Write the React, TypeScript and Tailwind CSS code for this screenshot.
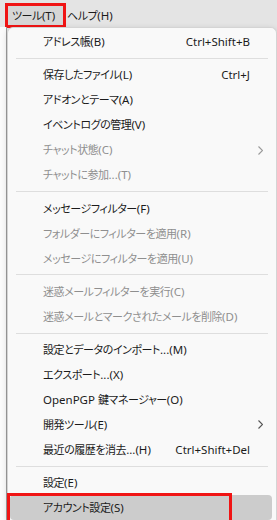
import React from "react";

type Item = {
  label: string;
  shortcut?: string;
  disabled?: boolean;
  submenu?: boolean;
  active?: boolean;
};

type Entry = Item | "sep";

const entries: Entry[] = [
  { label: "アドレス帳(B)", shortcut: "Ctrl+Shift+B" },
  "sep",
  { label: "保存したファイル(L)", shortcut: "Ctrl+J" },
  { label: "アドオンとテーマ(A)" },
  { label: "イベントログの管理(V)" },
  { label: "チャット状態(C)", disabled: true, submenu: true },
  { label: "チャットに参加...(T)", disabled: true },
  "sep",
  { label: "メッセージフィルター(F)" },
  { label: "フォルダーにフィルターを適用(R)", disabled: true },
  { label: "メッセージにフィルターを適用(U)", disabled: true },
  "sep",
  { label: "迷惑メールフィルターを実行(C)", disabled: true },
  { label: "迷惑メールとマークされたメールを削除(D)", disabled: true },
  "sep",
  { label: "設定とデータのインポート...(M)" },
  { label: "エクスポート...(X)" },
  { label: "OpenPGP 鍵マネージャー(O)" },
  { label: "開発ツール(E)", submenu: true },
  { label: "最近の履歴を消去...(H)", shortcut: "Ctrl+Shift+Del" },
  "sep",
  { label: "設定(E)" },
  { label: "アカウント設定(S)", active: true },
];

// 英数字とかなを分けて、幅を元の画面に近づける
function Txt({ s }: { s: string }) {
  const parts = s.match(/[\x20-\x7E]+|[^\x20-\x7E]+/g) ?? [];
  return (
    <>
      {parts.map((p, i) =>
        /^[\x20-\x7E]/.test(p) ? (
          <span key={i} className="text-[11.5px]">
            {p}
          </span>
        ) : (
          <span key={i} className="tracking-[-0.45px]">
            {p}
          </span>
        )
      )}
    </>
  );
}

function Chevron({ disabled }: { disabled?: boolean }) {
  return (
    <svg width="5" height="9" viewBox="0 0 5 9" className="block">
      <polyline
        points="0.5,0.5 4.5,4.5 0.5,8.5"
        fill="none"
        stroke={disabled ? "#9a9a9a" : "#555555"}
        strokeWidth="1.1"
      />
    </svg>
  );
}

function MenuRow({ item }: { item: Item }) {
  const color = item.disabled ? "text-[#8f8f8f]" : "text-[#1b1b1b]";
  if (item.active) {
    return (
      <div className="relative ml-[2px] mr-[4px] flex h-[25px] items-center rounded-[4px] bg-[#cccccc] pl-[33px]">
        <span className={`flex-1 whitespace-nowrap ${color}`}>
          <Txt s={item.label} />
        </span>
        {/* 赤枠の注記 */}
        <div className="absolute -left-[3px] -top-[2.5px] h-[30px] w-[225px] border-[3px] border-[#f01414]" />
      </div>
    );
  }
  return (
    <div className="flex h-[25px] items-center pl-[35px] pr-[13px]">
      <span className={`flex-1 whitespace-nowrap ${color}`}>
        <Txt s={item.label} />
      </span>
      {item.shortcut && (
        <span className={`whitespace-nowrap ${color}`}>
          <Txt s={item.shortcut} />
        </span>
      )}
      <div className="flex w-[13px] shrink-0 justify-end">
        {item.submenu && <Chevron disabled={item.disabled} />}
      </div>
    </div>
  );
}

export default function App() {
  return (
    <div
      className="flex h-[520px] w-[277px] flex-col overflow-hidden bg-[#e4e4e4] text-[11px] leading-none [font-feature-settings:'palt']"
      style={{ fontFamily: '"Noto Sans", "Noto Sans CJK JP", sans-serif' }}
    >
      {/* メニューバー */}
      <div className="flex h-[27px] shrink-0 items-start pt-[3px] pl-[5px] text-[#1b1b1b]">
        <div className="flex h-[25px] w-[61px] items-center border-[3px] border-[#f01414] bg-[#d6d6d6] pl-[4px]">
          <Txt s="ツール(T)" />
        </div>
        <div className="flex h-[25px] items-center pl-[1px]">
          <Txt s="ヘルプ(H)" />
        </div>
      </div>

      <div className="flex min-h-0 flex-1">
        {/* 背後のウィンドウ */}
        <div className="w-[6px] shrink-0 bg-[#fbfbfb]" />
        <div className="w-px shrink-0 bg-[#9c9c9c]" />

        {/* ドロップダウン */}
        <div className="flex-1 rounded-t-[6px] border border-b-0 border-[#d4d4d4] bg-[#f9f9f9] pt-[1.5px] shadow-[0_2px_6px_rgba(0,0,0,0.15)]">
          {entries.map((e, i) =>
            e === "sep" ? (
              <div key={i} className="mx-[8px] my-[3.6px] h-px bg-[#dedede]" />
            ) : (
              <MenuRow key={i} item={e} />
            )
          )}
        </div>
      </div>
    </div>
  );
}
